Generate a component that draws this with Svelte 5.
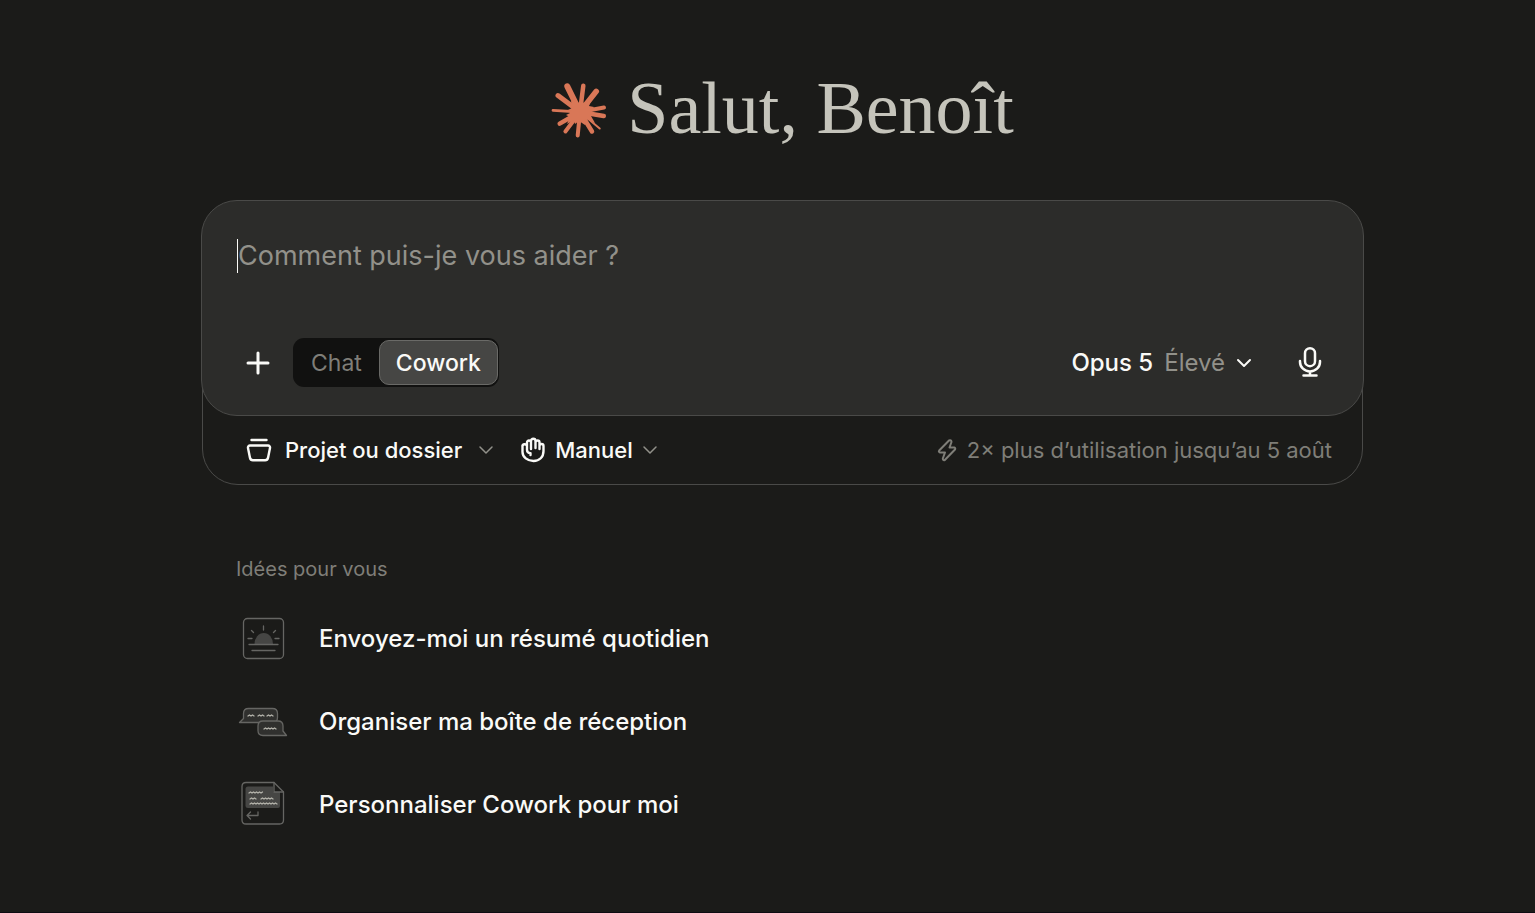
<script>
    let mode = $state("Cowork");
    let prompt = $state("");

    const modes = ["Chat", "Cowork"];
    const ideas = [
        { icon: "sunrise", label: "Envoyez-moi un résumé quotidien" },
        { icon: "bubbles", label: "Organiser ma boîte de réception" },
        { icon: "note", label: "Personnaliser Cowork pour moi" },
    ];

    // tip of each ray of the logo, with its stroke width
    const rays = [
        [16.3, 5.3, 6], [32.3, 4.7, 4.5], [45.3, 10.3, 5.5], [53, 26.5, 4], [52.8, 35, 4.5], [48.7, 47.5, 2],
        [41, 50.5, 4.5], [26.7, 54.5, 4], [14.4, 50.5, 4], [8.7, 42.6, 4.5], [2, 29.3, 2.8], [7, 14.6, 5],
    ];
</script>

{#snippet chevron()}
    <svg class="chevron" viewBox="0 0 16 16" aria-hidden="true"><path d="M2 5l6 6 6-6" /></svg>
{/snippet}

<main class="page">
    <div class="column">
        <header class="greeting">
            <svg class="logo" viewBox="0 0 56 58" aria-hidden="true">
                {#each rays as [x, y, w]}
                    <path d="M29 31L{x} {y}" stroke-width={w} />
                {/each}
                <path class="core" d="M20 20l7 2 3-2 3 2 8-5-3 8 5 1-3 4 5 3-5 2 4 7-9-4-1 6-6-4-4 3-1-4-7 4 3-7-4-2 4-2-2-3 4-2z" />
            </svg>
            <h1>Salut, Benoît</h1>
        </header>

        <form class="composer" onsubmit={(e) => e.preventDefault()}>
            <div class="box">
                <div class="prompt">
                    <span class="caret"></span>
                    <input type="text" bind:value={prompt} placeholder="Comment puis-je vous aider ?" aria-label="Message" />
                </div>
                <div class="tools">
                    <button type="button" class="plain" aria-label="Ajouter">
                        <svg class="plus" viewBox="0 0 26 26"><path d="M13 3v20M3 13h20" /></svg>
                    </button>
                    <div class="modes" role="group" aria-label="Mode">
                        {#each modes as name}
                            <button type="button" class:active={mode == name} aria-pressed={mode == name} onclick={() => (mode = name)}>{name}</button>
                        {/each}
                    </div>
                    <button type="button" class="plain model" aria-haspopup="menu">
                        <strong>Opus 5</strong>
                        <span>Élevé</span>
                        {@render chevron()}
                    </button>
                    <button type="button" class="plain" aria-label="Dicter">
                        <svg class="mic" viewBox="0 0 24 32">
                            <rect x="7" y="1.2" width="10" height="18" rx="5" />
                            <path d="M2 14v1a10 9.500 0 0 0 20 0v-1M12 24.500V28.500M5.500 28.500h13" />
                        </svg>
                    </button>
                </div>
            </div>
            <div class="context">
                <button type="button" class="plain folder" aria-haspopup="menu">
                    <svg class="icon" viewBox="0 0 26 26" aria-hidden="true">
                        <path d="M5.500 3h15M4 8.500h18a2 2 0 0 1 2 2.400l-2 10a3 3 0 0 1-3 2.300H7a3 3 0 0 1-3-2.300l-2-10a2 2 0 0 1 2-2.400z" />
                    </svg>
                    <span>Projet ou dossier</span>
                    {@render chevron()}
                </button>
                <button type="button" class="plain manual" aria-haspopup="menu">
                    <svg class="icon" viewBox="0 0 26 26" aria-hidden="true">
                        <path d="M7 13V5.500a2 2 0 0 1 4 0V12M11 11V4a2 2 0 0 1 4.500 0v7M15.500 5.500a2 2 0 0 1 4 0V12M19.500 9a2 2 0 0 1 4 0v5c0 6-4 10-10 10S2.500 20 2.500 15V10a2.200 2.200 0 0 1 4.500-1M7 13c0 2 1 3 3.500 3.200V18" />
                    </svg>
                    <span>Manuel</span>
                    {@render chevron()}
                </button>
                <p class="offer">
                    <svg viewBox="0 0 20 24" aria-hidden="true">
                        <path d="M12 2.500L2.200 12.500q-1 1.500.8 2H8L5.800 20.500q0 2.200 2 1.500L18 11.500q.8-1.500-.8-2H12.500l2-5.500q-.3-2.300-2.500-1.500z" />
                    </svg>
                    2× plus d’utilisation jusqu’au 5 août
                </p>
            </div>
        </form>

        <section class="ideas">
            <h2>Idées pour vous</h2>
            <ul>
                {#each ideas as idea}
                    <li>
                        <button type="button" class="plain">
                            <svg class="drawing" viewBox="0 0 54 50" aria-hidden="true">
                                {#if idea.icon == "sunrise"}
                                    <rect x="7.500" y="4.500" width="40" height="40" rx="4" />
                                    <path class="fill" d="M18.500 30a9.200 11 0 0 1 18.500 0z" />
                                    <path d="M13 30.500h29M16 36.500h23M27.500 12v4M15.500 16.500l2 2M39.500 16.500l-2 2M12 24.500h4M39 24.500h4" />
                                {:else if idea.icon == "bubbles"}
                                    <path class="dim" d="M12.500 11.500h24q5 0 5 5v4q0 5-5 5H3.500l4-4v-5q0-5 5-5z" />
                                    <path class="dim" d="M27 24h15q5 0 5 5v5l3.500 4.500H27q-5 0-5-5V29q0-5 5-5z" />
                                    <path class="ink" d="M12 19l1.500-1 1.500 1 1.500-1 1.500 1M22 19l1.500-1 1.500 1 1.500-1 1.500 1M31 19l1.500-1 1.500 1 1.500-1 1.500 1M28 32l1.500-1 1.500 1 1.500-1 1.500 1 1.500-1 1.500 1 1.500-1 1.500 1" />
                                {:else}
                                    <path d="M10 2.500h28l9.500 9.500v28q0 4-4 4H10q-4 0-4-4V6.500q0-4 4-4z" />
                                    <path class="fill" d="M12 6.500h25V12h7v14q0 2-2 2H12q-2.500 0-2.500-2V9q0-2.500 2.500-2.500z" />
                                    <path d="M38 2.500V12h9.500M22 32v3.500H11M14.500 32L11 35.500l3.500 3.500" />
                                    <path class="ink" d="M13 13l1.500-1 1.500 1 1.500-1 1.500 1 1.500-1 1.500 1 1.500-1 1.500 1 1.500-1M14 19l1.500-1 1.500 1 1.500-1 1.500 1M25 19l1.500-1 1.500 1 1.500-1 1.500 1 1.500-1 1.500 1 1.500-1 1.500 1M14 24l1.500-1 1.500 1 1.500-1 1.500 1 1.500-1 1.500 1 1.500-1 1.500 1 1.500-1 1.500 1 1.500-1 1.500 1 1.500-1 1.500 1 1.500-1 1.500 1 1.500-1 1.500 1" />
                                {/if}
                            </svg>
                            <span>{idea.label}</span>
                        </button>
                    </li>
                {/each}
            </ul>
        </section>
    </div>
</main>

<style>
    :global(body) {
        background: #1b1b19;
    }

    .page {
        box-sizing: border-box;
        min-height: 100vh;
        padding: 66px 24px 0 54px;
        border-bottom: 1px solid #0d0c12;
        background: #1b1b19;
        color: #fafaf7;
        font-family: Inter, "Liberation Sans", sans-serif;
        font-size: 24px;
        line-height: 32px;
    }

    .column {
        max-width: 1163px;
        margin: 0 auto;
    }

    svg {
        flex: none;
        fill: none;
        stroke: currentColor;
        stroke-width: 2;
        stroke-linecap: round;
        stroke-linejoin: round;
    }

    h1, h2, p, ul {
        margin: 0;
        padding: 0;
        font-weight: 400;
    }

    .greeting {
        display: flex;
        justify-content: center;
        align-items: center;
        gap: 20px;
        margin-bottom: 46px;
    }

    .greeting h1 {
        padding-bottom: 4px;
        color: #c5c4bb;
        font-family: "Liberation Serif", serif;
        font-size: 74px;
        line-height: 84px;
    }

    .logo {
        width: 56px;
        height: 58px;
        color: #d97757;
    }

    .logo .core {
        fill: currentColor;
        stroke: none;
    }

    .composer {
        display: flex;
        flex-direction: column;
    }

    .box {
        z-index: 1;
        box-sizing: border-box;
        padding: 38px 35px 28px;
        border: 1px solid #4a4a48;
        border-radius: 36px;
        background: #2c2c2a;
    }

    .prompt {
        display: flex;
        align-items: center;
        height: 34px;
        margin-bottom: 65px;
    }

    .caret {
        width: 1px;
        height: 34px;
        background: #fafaf7;
    }

    input {
        flex: 1;
        min-width: 0;
        padding: 0;
        border: none;
        outline: none;
        background: none;
        color: inherit;
        caret-color: transparent;
        font: inherit;
        font-size: 27px;
    }

    input::placeholder {
        color: #92918a;
        opacity: 1;
    }

    button {
        padding: 0;
        border: none;
        background: none;
        color: inherit;
        font: inherit;
        cursor: pointer;
    }

    .plain {
        display: flex;
        align-items: center;
    }

    .tools {
        display: flex;
        align-items: center;
        padding: 0 6px 0 8px;
    }

    .plus {
        width: 26px;
        height: 26px;
        stroke-width: 3;
    }

    .modes {
        display: flex;
        margin-left: 22px;
        padding: 2px 1px;
        border-radius: 11px;
        background: #111110;
    }

    .modes button {
        box-sizing: border-box;
        height: 45px;
        padding: 0 16px;
        border: 1px solid transparent;
        border-radius: 10px;
        color: #7f7e78;
        font-size: 23px;
    }

    .modes .active {
        border-color: #6a6a67;
        background: #464644;
        color: #fafaf7;
        font-weight: 500;
    }

    .model {
        gap: 11px;
        margin-left: auto;
        margin-right: 46px;
    }

    .model strong {
        font-weight: 500;
    }

    .model span {
        color: #92918a;
    }

    .chevron {
        width: 16px;
        height: 16px;
    }

    .mic {
        width: 24px;
        height: 32px;
        overflow: visible;
        stroke-width: 2.500;
    }

    .context {
        display: flex;
        align-items: center;
        box-sizing: border-box;
        height: 105px;
        margin: -36px 1px 0;
        padding: 34px 30px 0 43px;
        border: 1px solid #4a4a48;
        border-radius: 0 0 36px 36px;
        font-size: 22px;
    }

    .context button {
        font-weight: 500;
    }

    .context .icon {
        width: 26px;
        height: 26px;
        stroke-width: 2.400;
    }

    .context .chevron {
        color: #92918a;
        stroke-width: 1.500;
    }

    .folder .icon {
        margin-right: 13px;
    }

    .folder .chevron {
        margin-left: 16px;
    }

    .manual {
        gap: 9px;
        margin-left: 26px;
    }

    .offer {
        display: flex;
        align-items: center;
        gap: 10px;
        margin-left: auto;
        color: #7f7e78;
    }

    .offer svg {
        width: 20px;
        height: 24px;
    }

    .ideas {
        margin-top: 68px;
        padding: 0 35px;
    }

    .ideas h2 {
        color: #7f7e78;
        font-size: 20px;
    }

    .ideas ul {
        display: grid;
        gap: 33px;
        margin-top: 29px;
        list-style: none;
    }

    .ideas button {
        gap: 29px;
        font-weight: 500;
    }

    .drawing {
        width: 54px;
        height: 50px;
        color: #666663;
        stroke-width: 1.300;
    }

    .fill {
        fill: #464644;
        stroke: none;
    }

    .dim {
        fill: #30302e;
    }

    .ink {
        stroke: #b5b4ac;
    }
</style>
